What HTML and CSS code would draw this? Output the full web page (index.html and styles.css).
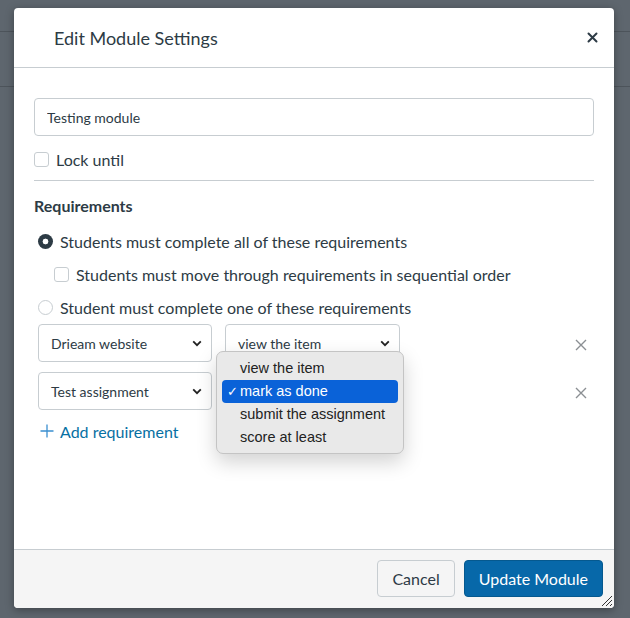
FILE: index.html
```html
<!DOCTYPE html>
<html lang="en">
<head>
    <meta charset="UTF-8">
    <meta name="viewport" content="width=device-width, initial-scale=1.0">
    <title>Edit Module Settings</title>
    <link rel="stylesheet" href="styles.css">
</head>
<body>

    <div class="page">
        <div class="page-row first"></div>
        <div class="page-row second"></div>
    </div>

    <div class="dialog">
        <div class="dialog-header">
            <h2>Edit Module Settings</h2>
            <button class="close-btn" aria-label="Close">
                <svg width="11" height="11" viewBox="0 0 11 11"><path d="M1.5 1.5 L9.5 9.5 M9.5 1.5 L1.5 9.5" stroke="#2d3b45" stroke-width="2" stroke-linecap="round"/></svg>
            </button>
        </div>

        <div class="dialog-body">
            <input type="text" class="text-input" value="Testing module">

            <div class="check-row">
                <span class="checkbox"></span>
                <span>Lock until</span>
            </div>

            <hr class="divider">

            <h3 class="section-title">Requirements</h3>

            <div class="radio-row">
                <span class="radio checked"></span>
                <span>Students must complete all of these requirements</span>
            </div>
            <div class="check-row sub">
                <span class="checkbox"></span>
                <span>Students must move through requirements in sequential order</span>
            </div>
            <div class="radio-row second">
                <span class="radio"></span>
                <span>Student must complete one of these requirements</span>
            </div>

            <div class="req-row">
                <div class="select item-select">Drieam website
                    <svg width="10" height="7" viewBox="0 0 10 7"><path d="M1.2 1.3 L5 5.2 L8.8 1.3" fill="none" stroke="#222" stroke-width="1.8"/></svg>
                </div>
                <div class="select type-select">view the item
                    <svg width="10" height="7" viewBox="0 0 10 7"><path d="M1.2 1.3 L5 5.2 L8.8 1.3" fill="none" stroke="#222" stroke-width="1.8"/></svg>
                </div>
                <button class="remove-btn" aria-label="Remove">
                    <svg width="12" height="12" viewBox="0 0 12 12"><path d="M1 1 L11 11 M11 1 L1 11" stroke="#8b8f93" stroke-width="1.4"/></svg>
                </button>
            </div>
            <div class="req-row">
                <div class="select item-select">Test assignment
                    <svg width="10" height="7" viewBox="0 0 10 7"><path d="M1.2 1.3 L5 5.2 L8.8 1.3" fill="none" stroke="#222" stroke-width="1.8"/></svg>
                </div>
                <!-- covered by the open popup below -->
                <div class="select type-select"></div>
                <button class="remove-btn" aria-label="Remove">
                    <svg width="12" height="12" viewBox="0 0 12 12"><path d="M1 1 L11 11 M11 1 L1 11" stroke="#8b8f93" stroke-width="1.4"/></svg>
                </button>
            </div>

            <a class="add-req" href="#">
                <svg width="14" height="14" viewBox="0 0 14 14"><path d="M7 0.5 V13.5 M0.5 7 H13.5" stroke="#3a8fd0" stroke-width="1.3"/></svg>
                Add requirement
            </a>
        </div>

        <div class="dialog-footer">
            <button class="btn">Cancel</button>
            <button class="btn btn-primary">Update Module</button>
        </div>

        <!-- open native popup of the second row -->
        <ul class="popup-menu">
            <li>view the item</li>
            <li class="selected"><span class="tick">✓</span>mark as done</li>
            <li>submit the assignment</li>
            <li>score at least</li>
        </ul>

        <svg class="resize-grip" width="12" height="12" viewBox="0 0 12 12"><path d="M11 1 L1 11 M11 5 L5 11 M11 9 L9 11" stroke="#333" stroke-width="1"/></svg>
    </div>

</body>
</html>
```

FILE: styles.css
```css
body {
    margin: 0;
    height: 618px;
    overflow: hidden;
    background-color: #5e666e;
    font-family: 'Lato', 'Open Sans', sans-serif;
    color: #2d3b45;
}
.page-row.first {
    height: 31px;
    border-bottom: 1px solid #4d545b;
}
.page-row.second {
    height: 54px;
    border-bottom: 1px solid #4d545b;
}
.dialog {
    position: absolute;
    left: 14px;
    top: 8px;
    width: 600px;
    height: 600px;
    background-color: #ffffff;
    border-radius: 4px;
    box-shadow: 0 2px 8px rgba(0, 0, 0, 0.35);
    display: flex;
    flex-direction: column;
    overflow: hidden;
}
.dialog-header {
    height: 59px;
    border-bottom: 1px solid #c7cdd1;
    display: flex;
    align-items: center;
    justify-content: space-between;
    padding: 0 16px 0 40px;
}
.dialog-header h2 {
    margin: 0;
    font-size: 18px;
    font-weight: normal;
}
.close-btn, .remove-btn {
    border: none;
    background: none;
    padding: 0;
    display: flex;
    cursor: pointer;
}
.dialog-body {
    flex: 1;
    padding: 30px 20px 0 20px;
    font-size: 16px;
}
.text-input {
    display: block;
    box-sizing: border-box;
    width: 100%;
    height: 38px;
    margin: 0;
    padding: 0 12px;
    border: 1px solid #c7cdd1;
    border-radius: 4px;
    font-family: 'Lato', sans-serif;
    font-size: 14px;
    color: #2d3b45;
}
.check-row, .radio-row {
    display: flex;
    align-items: center;
    height: 24px;
}
.check-row {
    margin-top: 11px;
}
.check-row .checkbox {
    margin-right: 7px;
}
.check-row.sub {
    margin-top: 9px;
    padding-left: 20px;
}
.checkbox {
    box-sizing: border-box;
    width: 15px;
    height: 15px;
    border: 1px solid #c7cdd1;
    border-radius: 3px;
    background-color: #fff;
}
.divider {
    margin: 9px 0 0 0;
    border: none;
    border-top: 1px solid #c7cdd1;
}
.section-title {
    margin: 13px 0 0 0;
    height: 24px;
    line-height: 24px;
    font-size: 16px;
    font-weight: bold;
}
.radio-row {
    margin-top: 11px;
    padding-left: 4px;
}
.radio-row.second {
    margin-top: 9px;
}
.radio {
    box-sizing: border-box;
    width: 15px;
    height: 15px;
    margin-right: 7px;
    border-radius: 50%;
    border: 1px solid #c7cdd1;
    background-color: #fff;
}
.radio.checked {
    border: none;
    background: radial-gradient(circle, #fff 0, #fff 2.6px, #2d3b45 3.2px);
}
.req-row {
    display: flex;
    align-items: center;
    gap: 13px;
    margin-top: 5px;
    padding-left: 4px;
}
.req-row + .req-row {
    margin-top: 10px;
}
.select {
    box-sizing: border-box;
    height: 38px;
    width: 174px;
    padding: 0 9px 0 12px;
    border: 1px solid #c7cdd1;
    border-radius: 4px;
    display: flex;
    align-items: center;
    justify-content: space-between;
    font-size: 14px;
    color: #2d3b45;
    background-color: #fff;
}
.type-select {
    width: 175px;
}
.remove-btn {
    margin-left: auto;
    margin-right: 7px;
    margin-top: 3px;
}
.add-req {
    display: flex;
    align-items: center;
    gap: 6px;
    margin-top: 9px;
    height: 24px;
    padding-left: 6px;
    color: #0770a3;
    text-decoration: none;
}
.dialog-footer {
    box-sizing: border-box;
    height: 59px;
    border-top: 1px solid #c7cdd1;
    background-color: #f5f5f5;
    display: flex;
    justify-content: flex-end;
    align-items: flex-start;
    gap: 9px;
    padding: 10px 11px 0 0;
}
.btn {
    height: 37px;
    padding: 0 14px;
    border: 1px solid #c7cdd1;
    border-radius: 4px;
    background-color: #f5f5f5;
    font-family: 'Lato', sans-serif;
    font-size: 16px;
    color: #2d3b45;
    cursor: pointer;
}
.btn-primary {
    background-color: #0768a9;
    border-color: #05598f;
    color: #ffffff;
}
.popup-menu {
    position: absolute;
    left: 202px;
    top: 343px;
    width: 188px;
    box-sizing: border-box;
    margin: 0;
    padding: 5px 5px 4px 5px;
    list-style: none;
    background-color: #e9e9e9;
    border: 1px solid #c4c4c4;
    border-radius: 7px;
    box-shadow: 0 8px 20px rgba(0, 0, 0, 0.18);
    font-family: 'Liberation Sans', Arial, sans-serif;
    font-size: 14.5px;
    color: #222;
}
.popup-menu li {
    height: 23px;
    line-height: 23px;
    padding-left: 18px;
    border-radius: 4px;
    position: relative;
}
.popup-menu li.selected {
    background-color: #0a62d8;
    color: #ffffff;
}
.popup-menu .tick {
    position: absolute;
    left: 5px;
    font-size: 13px;
}
.resize-grip {
    position: absolute;
    right: 1px;
    bottom: 1px;
}
```
